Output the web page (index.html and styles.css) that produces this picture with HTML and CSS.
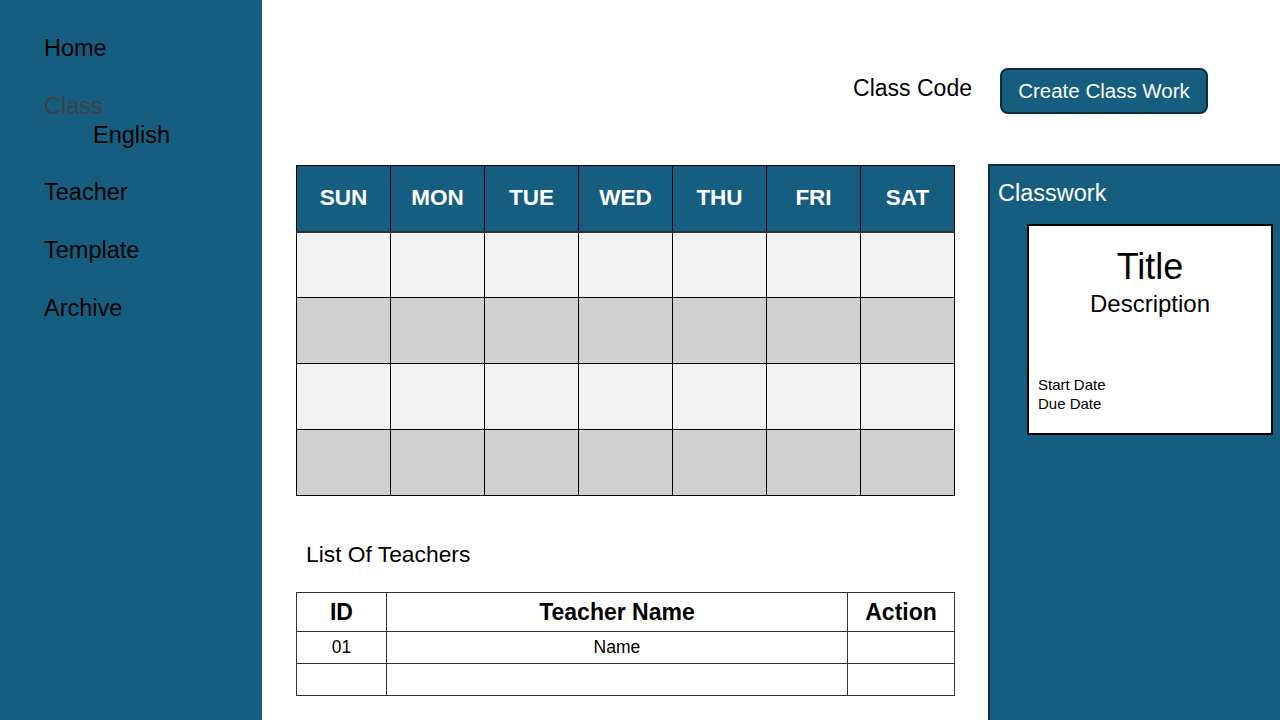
FILE: index.html
```html
<!DOCTYPE html>
<html>
<head>
<meta charset="utf-8">
<link rel="stylesheet" href="styles.css">
</head>
<body>
<div class="app">
  <aside class="sidebar">
    <nav class="nav">
      <div class="nav-item">Home</div>
      <div class="nav-group">
        <div class="nav-item nav-muted">Class</div>
        <div class="nav-sub">English</div>
      </div>
      <div class="nav-item">Teacher</div>
      <div class="nav-item">Template</div>
      <div class="nav-item">Archive</div>
    </nav>
  </aside>
  <main class="main">
    <div class="topbar">
      <span class="class-code">Class Code</span>
      <button class="btn">Create Class Work</button>
    </div>
    <div class="content">
      <div class="left">
        <table class="calendar">
          <thead>
            <tr><th>SUN</th><th>MON</th><th>TUE</th><th>WED</th><th>THU</th><th>FRI</th><th>SAT</th></tr>
          </thead>
          <tbody>
            <tr class="light"><td></td><td></td><td></td><td></td><td></td><td></td><td></td></tr>
            <tr class="dark"><td></td><td></td><td></td><td></td><td></td><td></td><td></td></tr>
            <tr class="light"><td></td><td></td><td></td><td></td><td></td><td></td><td></td></tr>
            <tr class="dark"><td></td><td></td><td></td><td></td><td></td><td></td><td></td></tr>
          </tbody>
        </table>
        <div class="list-title">List Of Teachers</div>
        <table class="teachers">
          <thead>
            <tr><th class="c-id">ID</th><th class="c-name">Teacher Name</th><th class="c-act">Action</th></tr>
          </thead>
          <tbody>
            <tr><td>01</td><td>Name</td><td></td></tr>
            <tr><td></td><td></td><td></td></tr>
          </tbody>
        </table>
      </div>
      <section class="panel">
        <div class="panel-title">Classwork</div>
        <div class="card">
          <div class="card-title">Title</div>
          <div class="card-desc">Description</div>
          <div class="card-dates">
            <div>Start Date</div>
            <div>Due Date</div>
          </div>
        </div>
      </section>
    </div>
  </main>
</div>
</body>
</html>
```
FILE: styles.css
```css
* { box-sizing: border-box; }
html, body { margin: 0; padding: 0; }
body {
  width: 1280px;
  height: 720px;
  overflow: hidden;
  font-family: "Liberation Sans", Arial, sans-serif;
  background: #fff;
  color: #000;
}
.app {
  display: flex;
  height: 720px;
}
.sidebar {
  width: 262px;
  flex: none;
  background: #165e80;
  padding: 36px 0 0 44px;
}
.nav {
  display: flex;
  flex-direction: column;
  gap: 34px;
}
.nav-item {
  font-size: 23.5px;
  line-height: 24px;
  color: #000;
}
.nav-group {
  display: flex;
  flex-direction: column;
  margin-bottom: -1px;
}
.nav-muted { color: #3f3f3f; }
.nav-sub {
  font-size: 23.5px;
  line-height: 24px;
  margin-top: 5px;
  padding-left: 49px;
}
.main {
  flex: 1;
  display: flex;
  flex-direction: column;
  overflow: hidden;
}
.topbar {
  display: flex;
  justify-content: flex-end;
  align-items: center;
  gap: 28px;
  height: 114px;
  padding: 68px 72px 0 0;
}
.class-code {
  font-size: 23px;
  margin-top: -5px;
}
.btn {
  width: 208px;
  height: 46px;
  background: #165e80;
  border: 2px solid #0d2c3c;
  border-radius: 8px;
  color: #fff;
  font-family: inherit;
  font-size: 20.5px;
  padding: 0;
}
.content {
  display: flex;
  gap: 33px;
  padding: 50px 0 0 34px;
}
.left {
  width: 659px;
  flex: none;
}
.calendar {
  border-collapse: collapse;
  width: 659px;
  margin-top: 1px;
}
.calendar th, .calendar td {
  border: 1px solid #000;
  width: 94px;
  padding: 0;
}
.calendar th {
  height: 66px;
  background: #165e80;
  color: #fff;
  font-weight: bold;
  font-size: 22.5px;
}
.calendar td { height: 66px; }
.calendar tr.light td { background: #f2f2f2; }
.calendar tr.dark td { background: #d0d0d0; }
.calendar tbody tr:first-child td { border-top: 2px solid #333; }
.list-title {
  font-size: 22.8px;
  margin: 46px 0 0 10px;
  line-height: 24px;
}
.teachers {
  border-collapse: collapse;
  width: 659px;
  margin-top: 26px;
}
.teachers th, .teachers td {
  border: 1px solid #333;
  text-align: center;
  padding: 0;
}
.teachers th {
  height: 39px;
  font-size: 23px;
  font-weight: bold;
}
.teachers td {
  height: 32px;
  font-size: 17.5px;
}
.c-id { width: 90px; }
.c-name { width: 462px; }
.c-act { width: 107px; }
.panel {
  width: 320px;
  flex: none;
  height: 560px;
  background: #165e80;
  border: 2px solid #0d2c3c;
  padding: 14px 0 0 8px;
}
.panel-title {
  color: #fff;
  font-size: 23.5px;
  line-height: 26px;
}
.card {
  width: 246px;
  height: 211px;
  margin: 18px 0 0 29px;
  background: #fff;
  border: 2px solid #000;
  display: flex;
  flex-direction: column;
  align-items: center;
  padding-top: 21px;
}
.card-title {
  font-size: 36px;
  line-height: 40px;
}
.card-desc {
  font-size: 24px;
  line-height: 28px;
  margin-top: 3px;
}
.card-dates {
  align-self: flex-start;
  margin: 57px 0 0 9px;
  font-size: 15px;
  line-height: 19px;
}
```
